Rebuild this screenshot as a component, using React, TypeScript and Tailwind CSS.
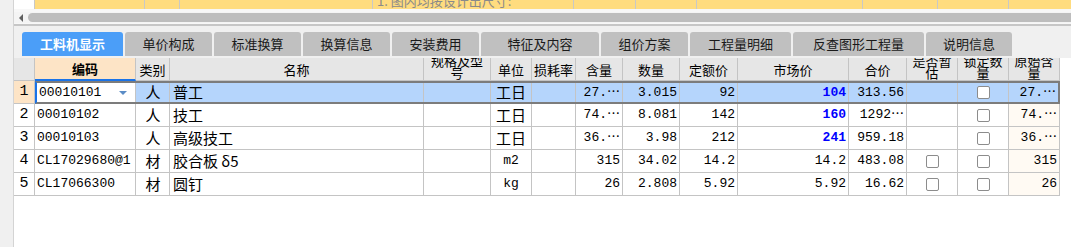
import React from "react";

const CJK = "font-['Noto_Sans_CJK_SC',sans-serif]";
const MONO = "font-['Liberation_Mono','Noto_Sans_CJK_SC',monospace]";

const TABS = [
  { label: "工料机显示", w: "w-[101px]", active: true },
  { label: "单价构成", w: "w-[87px]" },
  { label: "标准换算", w: "w-[87px]" },
  { label: "换算信息", w: "w-[87px]" },
  { label: "安装费用", w: "w-[87px]" },
  { label: "特征及内容", w: "w-[118px]" },
  { label: "组价方案", w: "w-[87px]" },
  { label: "工程量明细", w: "w-[101px]" },
  { label: "反查图形工程量", w: "w-[131px]" },
  { label: "说明信息", w: "w-[86px]" },
];

// widths of the yellow strip cells above the scrollbar
const TOP_CELLS = ["w-[110px]", "w-[35px]", "w-[193px]", "w-[201px]", "w-[62px]", "w-[61px]", "w-[166px]", "w-[75px]", "w-[71px]"];

type Align = "left" | "center" | "right";
type Col = { key: string; title: string; w: string; align: Align; wrap?: boolean };

const COLS: Col[] = [
  { key: "code", title: "编码", w: "w-[101px]", align: "left" },
  { key: "type", title: "类别", w: "w-[34px]", align: "center" },
  { key: "name", title: "名称", w: "w-[254px]", align: "left" },
  { key: "spec", title: "规格及型号", w: "w-[67px]", align: "left", wrap: true },
  { key: "unit", title: "单位", w: "w-[41px]", align: "center" },
  { key: "loss", title: "损耗率", w: "w-[44px]", align: "right" },
  { key: "content", title: "含量", w: "w-[47px]", align: "right" },
  { key: "qty", title: "数量", w: "w-[57px]", align: "right" },
  { key: "quota", title: "定额价", w: "w-[58px]", align: "right" },
  { key: "market", title: "市场价", w: "w-[111px]", align: "right" },
  { key: "total", title: "合价", w: "w-[58px]", align: "right" },
  { key: "est", title: "是否暂估", w: "w-[51px]", align: "center", wrap: true },
  { key: "lock", title: "锁定数量", w: "w-[51px]", align: "center", wrap: true },
  { key: "orig", title: "原始含量", w: "w-[51px]", align: "right", wrap: true },
];

type Row = {
  code: string;
  type: string;
  name: string;
  unit: string;
  content: string;
  qty: string;
  quota: string;
  market: string;
  marketBlue?: boolean;
  total: string;
  est: boolean;
  orig: string;
};

const ROWS: Row[] = [
  { code: "00010101", type: "人", name: "普工", unit: "工日", content: "27.⋯", qty: "3.015", quota: "92", market: "104", marketBlue: true, total: "313.56", est: false, orig: "27.⋯" },
  { code: "00010102", type: "人", name: "技工", unit: "工日", content: "74.⋯", qty: "8.081", quota: "142", market: "160", marketBlue: true, total: "1292⋯", est: false, orig: "74.⋯" },
  { code: "00010103", type: "人", name: "高级技工", unit: "工日", content: "36.⋯", qty: "3.98", quota: "212", market: "241", marketBlue: true, total: "959.18", est: false, orig: "36.⋯" },
  { code: "CL17029680@1", type: "材", name: "胶合板 δ5", unit: "m2", content: "315", qty: "34.02", quota: "14.2", market: "14.2", total: "483.08", est: true, orig: "315" },
  { code: "CL17066300", type: "材", name: "圆钉", unit: "kg", content: "26", qty: "2.808", quota: "5.92", market: "5.92", total: "16.62", est: true, orig: "26" },
];

const ALIGN: Record<Align, string> = {
  left: "justify-start pl-[2px]",
  center: "justify-center",
  right: "justify-end pr-[2px]",
};

function Checkbox() {
  return <span className="block w-[13px] h-[13px] rounded-[2px] border border-[#8c8c8c] bg-white" />;
}

function cellContent(col: Col, row: Row) {
  switch (col.key) {
    case "code":
      return <span className={`${MONO} text-[13px]`}>{row.code}</span>;
    case "type":
    case "name":
      return <span className={`${CJK} text-[15px] pl-[1px] whitespace-pre`}>{col.key === "type" ? row.type : row.name}</span>;
    case "unit":
      return row.unit === "工日" ? (
        <span className={`${CJK} text-[15px]`}>{row.unit}</span>
      ) : (
        <span className={`${MONO} text-[13px]`}>{row.unit}</span>
      );
    case "market":
      return (
        <span className={`${MONO} text-[13px] ${row.marketBlue ? "font-bold text-[#0000ff]" : ""}`}>{row.market}</span>
      );
    case "est":
      return row.est ? <Checkbox /> : null;
    case "lock":
      return <Checkbox />;
    case "spec":
    case "loss":
      return null;
    default:
      return <span className={`${MONO} text-[13px]`}>{(row as unknown as Record<string, string>)[col.key]}</span>;
  }
}

export default function App() {
  return (
    <div className={`w-[1071px] h-[247px] overflow-hidden flex bg-[#f0f0f0] text-black ${CJK}`}>
      {/* left gutter */}
      <div className="w-[14px] shrink-0 bg-[#f0f0f0] border-r border-[#d4d4d4]" />

      <div className="flex-1 flex flex-col min-w-0">
        {/* yellow strip from the grid above, clipped */}
        <div className="h-[9px] flex overflow-hidden">
          <div className="w-[21px] shrink-0 bg-white border-r border-[#c8c8c8]" />
          {TOP_CELLS.map((w, i) => (
            <div
              key={i}
              className={`${w} shrink-0 bg-[#ffdc7f] border-r border-[#c8c8c8] flex items-end overflow-hidden pb-[2px]`}
            >
              {i === 3 && (
                <span className="text-[13px] leading-[13px] text-[#8a8a8a] pl-[4px] whitespace-nowrap">
                  1. 图内均按设计出尺寸:
                </span>
              )}
            </div>
          ))}
          <div className="flex-1 bg-[#ffdc7f]" />
        </div>

        {/* horizontal scrollbar */}
        <div className="h-[3px] bg-[#f7f7f7]" />
        <div className="h-[11px] flex items-center bg-[#f4f4f4]">
          <div className="w-[14px] shrink-0 flex justify-center">
            <span className="block w-0 h-0 border-y-[4px] border-y-transparent border-r-[4px] border-r-[#606060]" />
          </div>
          <div className="flex-1 h-[9px] rounded-l-full bg-[#bdbdbd]" />
        </div>
        <div className="h-[1px] bg-[#f7f7f7]" />
        <div className="h-[2px] bg-[#c6c6c6]" />

        {/* tabs */}
        <div className="pt-[6px] pb-[2px] pl-[8px] flex gap-[2px]">
          {TABS.map((t) => (
            <div
              key={t.label}
              className={`${t.w} h-[24px] shrink-0 rounded-t-[3px] flex items-center justify-center text-[13px] ${
                t.active ? "bg-[#4b9ef8] text-white font-bold" : "bg-[#c0c0c0] text-[#1a1a1a]"
              }`}
            >
              {t.label}
            </div>
          ))}
        </div>

        {/* grid */}
        <div className="flex-1 bg-white">
          {/* header */}
          <div className="flex h-[23px]">
            <div className="w-[21px] shrink-0 bg-[#e6e6e6] border-r border-b border-[#c4c4c4]" />
            {COLS.map((c) => (
              <div
                key={c.key}
                className={`${c.w} shrink-0 overflow-hidden flex justify-center px-[2px] border-r border-[#c4c4c4] text-[13px] ${
                  c.wrap ? "items-end pb-[1px] leading-[12px]" : "items-center leading-[15px]"
                } ${
                  c.key === "code"
                    ? "bg-[#fde4c6] font-bold border-b-2 border-b-[#1a73e8]"
                    : "bg-[#e6e6e6] border-b"
                }`}
              >
                <span className="text-center">{c.title}</span>
              </div>
            ))}
            <div className="flex-1 bg-white" />
          </div>

          {ROWS.map((row, ri) => {
            const selected = ri === 0;
            return (
              <div key={row.code} className="flex h-[23px]">
                <div
                  className={`w-[21px] shrink-0 flex items-center justify-center border-r border-b border-[#c4c4c4] ${MONO} text-[15px] ${
                    selected ? "bg-[#fde4c6]" : "bg-white"
                  }`}
                >
                  {ri + 1}
                </div>
                {selected ? (
                  <div className="flex h-[23px] border-2 border-[#7c7c7c] border-l-[#1a73e8]">
                    {COLS.map((c, ci) => {
                      const w = ci === 0 ? "w-[99px]" : ci === COLS.length - 1 ? "w-[49px]" : c.w;
                      return (
                        <div
                          key={c.key}
                          className={`${w} shrink-0 flex items-center overflow-hidden whitespace-nowrap ${ALIGN[c.align]} ${
                            ci < COLS.length - 1 ? "border-r border-[#c4c4c4]" : ""
                          } ${c.key === "code" ? "bg-white relative" : "bg-[#b5d5fc]"}`}
                        >
                          {cellContent(c, row)}
                          {c.key === "code" && (
                            <span className="absolute right-[8px] top-[8px] w-0 h-0 border-x-[4px] border-x-transparent border-t-[4px] border-t-[#5b8cc6]" />
                          )}
                        </div>
                      );
                    })}
                  </div>
                ) : (
                  COLS.map((c) => (
                    <div
                      key={c.key}
                      className={`${c.w} shrink-0 flex items-center overflow-hidden whitespace-nowrap border-r border-b border-[#c4c4c4] ${ALIGN[c.align]} ${
                        c.key === "orig" ? "bg-[#fffaf3]" : "bg-white"
                      }`}
                    >
                      {cellContent(c, row)}
                    </div>
                  ))
                )}
              </div>
            );
          })}
        </div>
      </div>
    </div>
  );
}
